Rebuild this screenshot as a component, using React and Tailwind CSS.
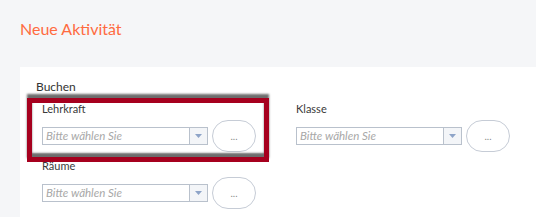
import React from 'react';

const Field = ({ label, highlight }) => (
  <div className="relative flex flex-col">
    {highlight && (
      <div className="absolute -left-[15px] -top-[3px] w-[242px] h-[64px] border-[5px] border-[#a6001e] shadow-[0_-4px_2px_rgba(60,60,60,0.75),inset_0_-4px_2px_rgba(60,60,60,0.75)] pointer-events-none z-10"></div>
    )}
    <div className="text-[11px] leading-[16px] text-[#3a3a3a]">{label}</div>
    <div className="mt-[3px] flex items-center h-[32px]">
      {/* Select */}
      <div className="flex w-[166px] h-[18px] border border-[#b9c1cc] bg-white">
        <div className="flex-1 pl-[3px] text-[11.5px] leading-[16px] italic text-[#a8a8a8]">
          Bitte wählen Sie
        </div>
        <div className="w-[18px] border-l border-[#b9c1cc] bg-[#f3f5f8] flex items-center justify-center">
          <svg width="7" height="4" viewBox="0 0 7 4">
            <path d="M0 0 L7 0 L3.5 4 Z" fill="#8ea4c8" />
          </svg>
        </div>
      </div>
      {/* Ellipsis button */}
      <div className="ml-[4px] w-[44px] h-[32px] rounded-[16px] border border-[#c6ccd6] bg-white flex items-center justify-center text-[10px] leading-none text-[#8a8a8a]">
        ...
      </div>
    </div>
  </div>
);

export default function App() {
  return (
    <div className="w-[536px] h-[217px] bg-[#f5f6f8] overflow-hidden" style={{ fontFamily: 'Lato, "Open Sans", sans-serif' }}>
      {/* Header */}
      <div className="h-[67px] px-5 pt-[19px]">
        <h1 className="text-[16px] leading-[20px] text-[#ff6b40] font-normal">Neue Aktivität</h1>
      </div>

      {/* Panel */}
      <div className="ml-5 h-[150px] bg-white pl-4 pt-3">
        <div className="text-[12px] leading-[16px] text-[#333]">Buchen</div>
        <div className="mt-[6px] pl-[6px] grid grid-cols-[254px_254px] gap-y-[6px]">
          <Field label="Lehrkraft" highlight />
          <Field label="Klasse" />
          <Field label="Räume" />
        </div>
      </div>
    </div>
  );
}
